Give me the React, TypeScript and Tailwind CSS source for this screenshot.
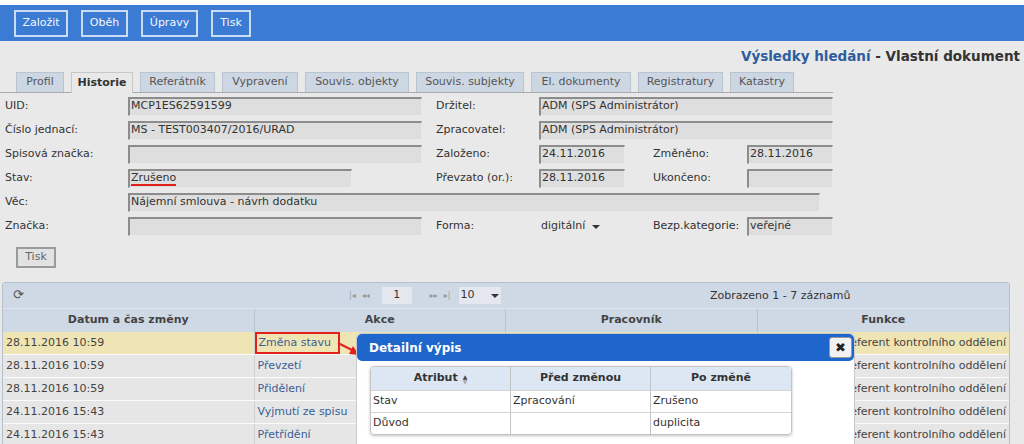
import React from 'react'

const font = { fontFamily: '"DejaVu Sans", Verdana, sans-serif' }

function Field({ w, value, underline }: { w: string; value?: string; underline?: boolean }) {
  return (
    <div
      className={`${w} h-[19px] bg-[#dedede] border-t-2 border-l-2 border-t-[#8c8c8c] border-l-[#8c8c8c] border-b border-r border-b-[#e9e9e9] border-r-[#e9e9e9] flex items-center pl-[1px] text-[11px] text-[#333] whitespace-nowrap overflow-hidden`}
    >
      {underline ? (
        <span className="border-b-2 border-[#e0201c] leading-[12px]">{value}</span>
      ) : (
        value
      )}
    </div>
  )
}

function Label({ w, children }: { w: string; children: React.ReactNode }) {
  return <div className={`${w} text-[11px] text-[#333] whitespace-nowrap`}>{children}</div>
}

const tabs = [
  ['Profil', 'w-[48px]'],
  ['Historie', 'w-[62px]'],
  ['Referátník', 'w-[75px]'],
  ['Vypravení', 'w-[76px]'],
  ['Souvis. objekty', 'w-[104px]'],
  ['Souvis. subjekty', 'w-[108px]'],
  ['El. dokumenty', 'w-[100px]'],
  ['Registratury', 'w-[85px]'],
  ['Katastry', 'w-[64px]'],
]

const buttons = [
  ['Založit', 'w-[54px]'],
  ['Oběh', 'w-[47px]'],
  ['Úpravy', 'w-[57px]'],
  ['Tisk', 'w-[40px]'],
]

const rows = [
  ['28.11.2016 10:59', 'Změna stavu'],
  ['28.11.2016 10:59', 'Převzetí'],
  ['28.11.2016 10:59', 'Přidělení'],
  ['24.11.2016 15:43', 'Vyjmutí ze spisu'],
  ['24.11.2016 15:43', 'Přetřídění'],
]

export default function App() {
  return (
    <div className="w-[1024px] h-[444px] overflow-hidden bg-[#e9e9e9] relative" style={font}>
      <div className="h-[5px] bg-white" />
      <div className="h-[36px] bg-[#3b7bd4] flex items-center gap-[13px] pl-[14px]">
        {buttons.map(([b, w]) => (
          <div
            key={b}
            className={`${w} h-[27px] border-2 border-[#c9dcf2] text-[#f4f8fd] text-[11px] flex items-center justify-center`}
          >
            {b}
          </div>
        ))}
      </div>

      <div className="h-[31px] flex items-center justify-end pr-[4px] text-[13.5px] font-bold">
        <span className="text-[#2d5d9f]">Výsledky hledání</span>
        <span className="text-[#333]">&nbsp;- Vlastní dokument</span>
      </div>

      <div className="flex items-end h-[21px] pl-[16px] gap-[7px] border-b border-[#a9a9a9] w-[833px]">
        {tabs.map(([t, w]) => (
          <div
            key={t}
            className={`${w} h-[20px] flex items-center justify-center text-[11px] border border-b-0 ${
              t === 'Historie'
                ? 'bg-[#e9e9e9] border-[#c8c8c8] font-bold text-[#333] h-[21px] -mb-px'
                : 'bg-[#cdd7e3] border-[#b9c4d1] text-[#555]'
            }`}
          >
            {t}
          </div>
        ))}
      </div>

      <div className="pt-[1px] flex flex-col">
        <div className="h-6 flex items-center">
          <Label w="w-[128px] pl-[5px]">UID:</Label>
          <Field w="w-[294px]" value="MCP1ES62591599" />
          <Label w="w-[117px] pl-[14px]">Držitel:</Label>
          <Field w="w-[294px]" value="ADM (SPS Administrátor)" />
        </div>
        <div className="h-6 flex items-center">
          <Label w="w-[128px] pl-[5px]">Číslo jednací:</Label>
          <Field w="w-[294px]" value="MS - TEST003407/2016/URAD" />
          <Label w="w-[117px] pl-[14px]">Zpracovatel:</Label>
          <Field w="w-[294px]" value="ADM (SPS Administrátor)" />
        </div>
        <div className="h-6 flex items-center">
          <Label w="w-[128px] pl-[5px]">Spisová značka:</Label>
          <Field w="w-[294px]" />
          <Label w="w-[117px] pl-[14px]">Založeno:</Label>
          <Field w="w-[86px]" value="24.11.2016" />
          <Label w="w-[122px] pl-[28px]">Změněno:</Label>
          <Field w="w-[86px]" value="28.11.2016" />
        </div>
        <div className="h-6 flex items-center">
          <Label w="w-[128px] pl-[5px]">Stav:</Label>
          <Field w="w-[224px]" value="Zrušeno" underline />
          <Label w="w-[187px] pl-[84px]">Převzato (or.):</Label>
          <Field w="w-[86px]" value="28.11.2016" />
          <Label w="w-[122px] pl-[28px]">Ukončeno:</Label>
          <Field w="w-[86px]" />
        </div>
        <div className="h-6 flex items-center">
          <Label w="w-[128px] pl-[5px]">Věc:</Label>
          <Field w="w-[692px]" value="Nájemní smlouva - návrh dodatku" />
        </div>
        <div className="h-6 flex items-center">
          <Label w="w-[128px] pl-[5px]">Značka:</Label>
          <Field w="w-[294px]" />
          <Label w="w-[117px] pl-[14px]">Forma:</Label>
          <div className="w-[69px] h-[19px] flex items-center text-[11px] text-[#333] pl-[2px] gap-[7px]">
            digitální
            <span className="w-0 h-0 border-l-[4px] border-r-[4px] border-t-[4px] border-l-transparent border-r-transparent border-t-[#333] mt-[2px]" />
          </div>
          <Label w="w-[139px] pl-[45px]">Bezp.kategorie:</Label>
          <Field w="w-[86px]" value="veřejné" />
        </div>
      </div>

      <div className="pl-[16px] pt-[9px]">
        <div className="w-[40px] h-[21px] border-2 border-[#9a9a9a] bg-[#e2e2e2] text-[11px] text-[#666] flex items-center justify-center">
          Tisk
        </div>
      </div>

      <div className="mt-[14px] ml-[2px] w-[1008px] border border-[#b5c0ce] rounded-t-[3px] text-[11px]">
        <div className="h-[25px] bg-[#cfd9e5] flex items-center relative">
          <span className="absolute left-[10px] top-[5px] text-[#555] text-[13px] leading-none">⟳</span>
          <div className="absolute left-[346px] top-[4px] flex items-center gap-[6px] text-[#999] text-[8px]">
            <span>|◂</span>
            <span>◂◂</span>
            <div className="ml-[6px] w-[30px] h-[17px] bg-[#e4e8ee] text-[11px] text-[#333] flex items-center justify-center">
              1
            </div>
            <span className="ml-[12px]">▸▸</span>
            <span>▸|</span>
            <div className="ml-[2px] w-[42px] h-[17px] bg-[#e4e8ee] text-[11px] text-[#333] flex items-center pl-[2px] gap-[16px]">
              10
              <span className="w-0 h-0 border-l-[4px] border-r-[4px] border-t-[4px] border-l-transparent border-r-transparent border-t-[#333]" />
            </div>
          </div>
          <span className="absolute left-[707px] top-[5px] text-[#333]">Zobrazeno 1 - 7 záznamů</span>
        </div>
        <div className="h-[24px] bg-[#cfd9e5] grid grid-cols-4 font-bold text-[#444] border-t border-[#dde4ec]">
          {['Datum a čas změny', 'Akce', 'Pracovník', 'Funkce'].map((h) => (
            <div key={h} className="flex items-center justify-center border-r border-[#b8c3d0] last:border-r-0">
              {h}
            </div>
          ))}
        </div>
        {rows.map(([d, a], i) => (
          <div
            key={i}
            className={`h-[23px] grid grid-cols-4 border-b border-[#fafafa] ${i === 0 ? 'bg-[#efe4b3]' : 'bg-[#e6e6e6]'}`}
          >
            <div className="flex items-center pl-[3px] text-[#444] border-r border-[#cfcfcf]">{d}</div>
            <div className="flex items-center pl-[3px] text-[#3a5e96] border-r border-[#cfcfcf]">
              {i === 0 ? (
                <span className="border-2 border-[#e3211c] pl-[2px] -ml-[3px] w-[85px] h-[22px] flex items-center">
                  {a}
                </span>
              ) : (
                a
              )}
            </div>
            <div className="border-r border-[#cfcfcf]" />
            <div className="flex items-center justify-end pr-[3px] text-[#444] whitespace-nowrap overflow-hidden">
              Referent kontrolního oddělení
            </div>
          </div>
        ))}
      </div>

      <svg className="absolute left-[336px] top-[340px]" width="26" height="18" viewBox="0 0 26 18">
        <line x1="2" y1="3" x2="16" y2="10" stroke="#e3211c" strokeWidth="2" />
        <polygon points="23,15 13,14 17,6" fill="#e3211c" />
      </svg>

      <div className="absolute left-[356px] top-[333px] w-[499px] h-[130px] bg-white border border-[#c9c9c9] rounded-t-[5px]">
        <div className="h-[27px] bg-[#1f66cc] rounded-[5px] flex items-center justify-between pl-[12px] pr-[2px]">
          <span className="text-white font-bold text-[12px]">Detailní výpis</span>
          <div className="w-[23px] h-[21px] bg-[#f2f2f2] border border-[#999] rounded-[3px] flex items-center justify-center text-[13px] font-bold text-[#222]">
            ✖
          </div>
        </div>
        <div className="ml-[13px] mt-[5px] w-[422px] border border-[#c4c4c4] rounded-[4px] shadow-[0_1px_3px_rgba(0,0,0,0.25)] text-[11px] overflow-hidden">
          <div className="h-[23px] bg-[#dde7f3] grid grid-cols-3 font-bold text-[#333]">
            <div className="flex items-center justify-center gap-[5px] border-r border-[#c4c4c4]">
              <span>Atribut</span>
              <span className="flex flex-col leading-[5px] text-[6px] text-[#444]">
                <span>▲</span>
                <span className="text-[#aaa]">▼</span>
              </span>
            </div>
            <div className="flex items-center justify-center border-r border-[#c4c4c4]">Před změnou</div>
            <div className="flex items-center justify-center">Po změně</div>
          </div>
          {[
            ['Stav', 'Zpracování', 'Zrušeno'],
            ['Důvod', '', 'duplicita'],
          ].map((r) => (
            <div key={r[0]} className="h-[22px] grid grid-cols-3 border-t border-[#d4d4d4] text-[#333]">
              <div className="flex items-center pl-[2px] border-r border-[#c4c4c4]">{r[0]}</div>
              <div className="flex items-center pl-[2px] border-r border-[#c4c4c4]">{r[1]}</div>
              <div className="flex items-center pl-[2px]">{r[2]}</div>
            </div>
          ))}
        </div>
      </div>
    </div>
  )
}
